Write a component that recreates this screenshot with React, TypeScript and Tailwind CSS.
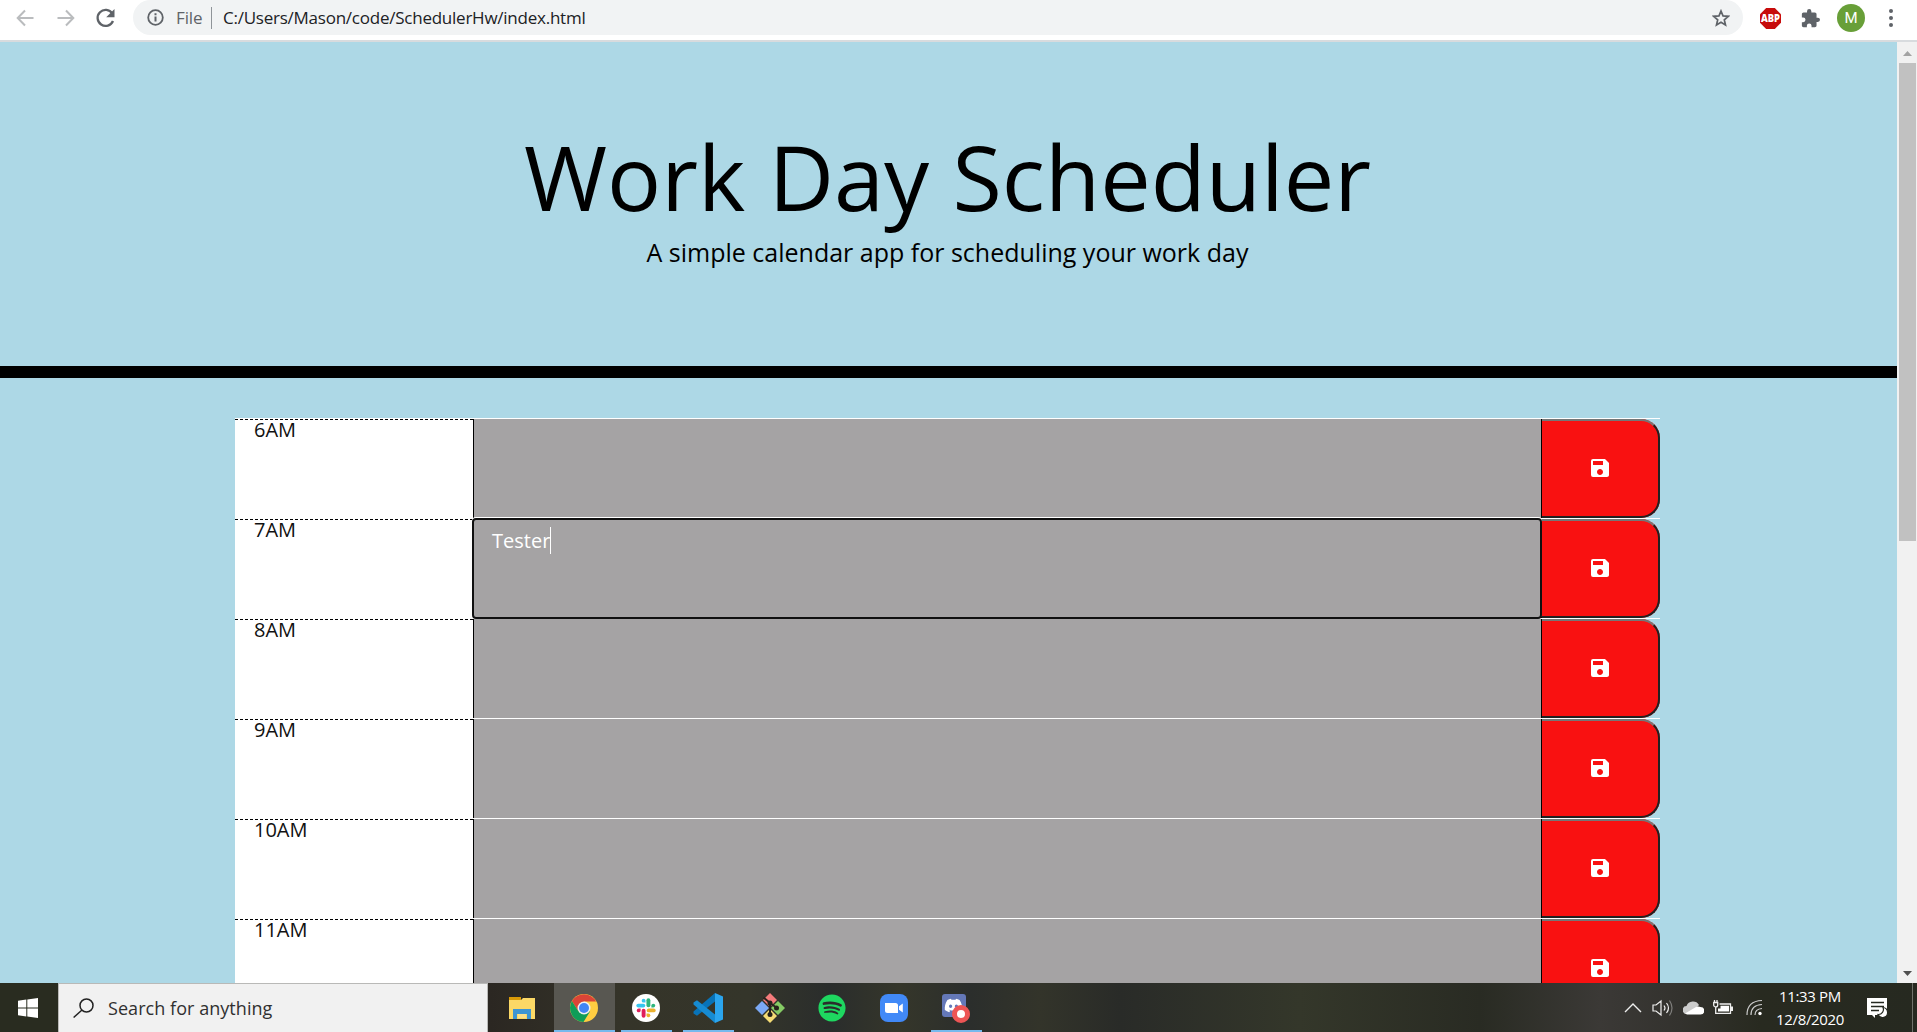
import React from "react";
import { MdSave } from "react-icons/md";
import { FaSpotify, FaDiscord } from "react-icons/fa";

const hours = ["6AM", "7AM", "8AM", "9AM", "10AM", "11AM"];

function BrowserBar() {
  return (
    <header className="flex h-[42px] shrink-0 items-start border-b-2 border-[#d8dbde] bg-white font-['Open_Sans',sans-serif] text-[#5f6368]">
      <div className="flex h-9 w-[133px] shrink-0 items-center">
        <svg className="ml-[16px] h-[18px] w-[18px]" viewBox="0 0 18 18" fill="none" stroke="#babcbe" strokeWidth="2">
          <path d="M17.5 9H2M9 1.5L1.7 9 9 16.5" />
        </svg>
        <svg className="ml-[23px] h-[18px] w-[18px]" viewBox="0 0 18 18" fill="none" stroke="#babcbe" strokeWidth="2">
          <path d="M.5 9H16M9 1.5L16.3 9 9 16.5" />
        </svg>
        <svg className="ml-[21px] h-[20px] w-[20px]" viewBox="0 0 20 20">
          <path d="M16.3 5.5A8 8 0 1 0 17 13" fill="none" stroke="#5f6368" strokeWidth="2.3" />
          <path d="M18.5 1v8.3h-8.3z" fill="#5f6368" />
        </svg>
      </div>
      <div className="flex h-[35px] w-[1610px] shrink-0 items-center rounded-[18px] bg-[#f1f3f4]">
        <svg className="ml-[14px] h-[17px] w-[17px]" viewBox="0 0 17 17">
          <circle cx="8.5" cy="8.5" r="7.3" fill="none" stroke="#5f6368" strokeWidth="1.8" />
          <path d="M8.5 7.4v5.2M8.5 4.2v2" stroke="#5f6368" strokeWidth="2" />
        </svg>
        <span className="ml-[12px] w-[26px] text-[17px] leading-[34px] tracking-[-0.1px]">File</span>
        <span className="ml-[9px] h-[22px] w-px bg-[#8f9499]" />
        <span className="ml-[11px] whitespace-nowrap text-[17px] leading-[34px] tracking-[-0.24px] text-[#202124]">
          C:/Users/Mason/code/SchedulerHw/index.html
        </span>
        <svg className="mr-[13px] ml-auto h-[18px] w-[18px]" viewBox="0 0 18 18" fill="none" stroke="#5f6368" strokeWidth="1.7">
          <path d="M9 2l2 4.9 5.3.4-4 3.5 1.2 5.2L9 13.2 4.500 16l1.200-5.200-4-3.500 5.300-.4z" />
        </svg>
      </div>
      <div className="flex h-9 flex-1 items-center">
        <svg className="ml-[17px] h-[21px] w-[21px]" viewBox="0 0 21 21">
          <path d="M6.200 0h8.600L21 6.200v8.600L14.800 21H6.200L0 14.800V6.200z" fill="#c70c0c" />
          <text x="10.500" y="14.200" textAnchor="middle" textLength="19" lengthAdjust="spacingAndGlyphs" fontFamily="Open Sans" fontSize="10.500" fontWeight="800" fill="#fff">ABP</text>
        </svg>
        <svg className="ml-[20px] h-[19px] w-[19px]" viewBox="1 1 22 22" fill="#5f6368">
          <path d="M20.500 11H19V7c0-1.100-.9-2-2-2h-4V3.500a2.500 2.500 0 0 0-5 0V5H4c-1.100 0-2 .9-2 2v3.800h1.500a2.700 2.700 0 0 1 0 5.400H2V20c0 1.100.9 2 2 2h3.800v-1.500a2.700 2.700 0 0 1 5.400 0V22H17c1.100 0 2-.9 2-2v-4h1.500a2.500 2.500 0 0 0 0-5z" />
        </svg>
        <div className="ml-[17px] flex h-[28px] w-[28px] items-center justify-center rounded-full bg-[#689f38] font-['Roboto',sans-serif] text-[15px] text-white">M</div>
        <div className="ml-[24px] flex flex-col gap-[3px]">
          <i className="h-[4px] w-[4px] rounded-full bg-[#5f6368]" />
          <i className="h-[4px] w-[4px] rounded-full bg-[#5f6368]" />
          <i className="h-[4px] w-[4px] rounded-full bg-[#5f6368]" />
        </div>
      </div>
    </header>
  );
}

function HourRow({ hour }: { hour: string }) {
  const focused = hour === "7AM";
  return (
    <div className="flex h-[100px] border-t border-white">
      <div className="w-[238px] shrink-0 border-t border-dashed border-black bg-white pl-[19px] text-[20px] leading-[20px] text-[#111]">
        {hour}
      </div>
      {focused ? (
        <div className="z-10 -mt-px -mr-px -ml-px flex h-[101px] w-[1070px] shrink-0 items-start rounded-[4px] border-2 border-[#101010] bg-[#a5a3a4] pt-[7px] pl-[18px] text-[20px] leading-[27px] text-white shadow-[0_-1px_0_0_#fff]">
          Tester
          <span className="h-[27px] w-px bg-white" />
        </div>
      ) : (
        <div className="h-[99px] w-[1068px] shrink-0 border-l border-black bg-[#a5a3a4]" />
      )}
      <div className="h-[99px] w-[119px] shrink-0 rounded-r-[19px] border-l border-black bg-[#f91111]">
        <div className="flex h-full w-full items-center justify-center rounded-r-[19px] border-t-2 border-r-2 border-b-2 border-t-[#767676] border-r-[#212121] border-b-[#212121] pb-[1px]">
          <MdSave className="h-[24px] w-[24px] text-white" />
        </div>
      </div>
    </div>
  );
}

function Page() {
  return (
    <main className="h-[941px] w-[1897px] shrink-0 overflow-hidden bg-[#add8e6] font-['Open_Sans',sans-serif] text-black">
      <div className="flex h-[336px] flex-col items-center border-b-[12px] border-black pt-[80px] pr-[2px]">
        <h1 className="text-[90px] leading-[108px] font-normal">Work Day Scheduler</h1>
        <p className="mt-[3px] text-[25px] leading-[38px]">A simple calendar app for scheduling your work day</p>
      </div>
      <div className="mt-[40px] ml-[235px] w-[1425px]">
        {hours.map((h) => (
          <HourRow key={h} hour={h} />
        ))}
      </div>
    </main>
  );
}

function Scrollbar() {
  return (
    <div className="flex w-[20px] flex-col items-center bg-[#f1f1f1]">
      <svg className="h-[21px] w-[20px] shrink-0" viewBox="0 0 20 21"><path d="M6 14l4.500-5 4.500 5z" fill="#a3a3a3" /></svg>
      <div className="h-[478px] w-[17px] bg-[#c1c1c1]" />
      <svg className="mt-auto h-[21px] w-[20px] shrink-0" viewBox="0 0 20 21"><path d="M6 9l4.500 5L15 9z" fill="#505050" /></svg>
    </div>
  );
}

function Explorer() {
  return (
    <svg className="h-[24px] w-[28px]" viewBox="0 0 28 24">
      <path d="M1 1h12v5H1z" fill="#d99a08" />
      <path d="M1 4h12l2-2h12v21H1z" fill="#fbd866" />
      <path d="M5 13h18v10h-4v-5h-10v5H5z" fill="#3d95d3" />
      <path d="M10 18h8v4h-8z" fill="#fbe08a" />
    </svg>
  );
}

function Chrome() {
  return (
    <svg className="h-[28px] w-[28px]" viewBox="0 0 28 28">
      <circle cx="14" cy="14" r="14" fill="#ffcd41" />
      <path d="M1.900 7A14 14 0 0 1 26.100 7.500H14L8.400 17.300z" fill="#db4437" />
      <path d="M1.900 7A14 14 0 0 0 13.500 28L20 17.500 8.400 17.300z" fill="#0f9d58" />
      <circle cx="14" cy="14" r="6.500" fill="#f1f1f1" />
      <circle cx="14" cy="14" r="5" fill="#4285f4" />
    </svg>
  );
}

function Slack() {
  return (
    <svg className="h-[28px] w-[28px]" viewBox="0 0 28 28">
      <circle cx="14" cy="14" r="14" fill="#fff" />
      <g fill="none" strokeWidth="3.900" strokeLinecap="round">
        <path d="M6.300 11.600h5" stroke="#36c5f0" />
        <path d="M16.400 6.300v5" stroke="#2eb67d" />
        <path d="M16.700 16.400h5" stroke="#ecb22e" />
        <path d="M11.600 16.700v5" stroke="#e01e5a" />
      </g>
      <path d="M13.500 8.600h-1.900a1.900 1.900 0 1 1 1.900-1.900z" fill="#36c5f0" />
      <path d="M19.400 13.500v-1.900a1.900 1.900 0 1 1 1.900 1.900z" fill="#2eb67d" />
      <path d="M14.500 19.400h1.900a1.900 1.900 0 1 1-1.900 1.900z" fill="#ecb22e" />
      <path d="M8.600 14.500v1.900a1.900 1.900 0 1 1-1.900-1.900z" fill="#e01e5a" />
    </svg>
  );
}

function Code() {
  return (
    <svg className="h-[30px] w-[30px]" viewBox="0 0 30 30">
      <path d="M22 0l8 3.500v23L22 30z" fill="#2ba5ee" />
      <path d="M22 0v8.500L4 22.700.5 20.500v-2z" fill="#0873b8" />
      <path d="M22 30v-8.500L4 7.300.5 9.500v2z" fill="#168bd2" />
    </svg>
  );
}

function Git() {
  return (
    <svg className="h-[30px] w-[30px]" viewBox="0 0 30 30">
      <path d="M15 0l7 7-7 7-7-7z" fill="#f47b7b" />
      <path d="M7 8l7 7-7 7-7-7z" fill="#7ba9f5" />
      <path d="M23 8l7 7-7 7-7-7z" fill="#85cb65" />
      <path d="M15 16l7 7-7 7-7-7z" fill="#f5dc75" />
      <path d="M8.500 4.500L15 10v12M15 10l7 5" fill="none" stroke="#26221c" strokeWidth="2" />
      <g fill="#26221c"><circle cx="15" cy="10" r="2.500" /><circle cx="15" cy="21.500" r="2.500" /><circle cx="21.500" cy="15" r="2.500" /></g>
    </svg>
  );
}

function Zoom() {
  return (
    <svg className="h-[28px] w-[28px]" viewBox="0 0 28 28">
      <rect width="28" height="28" rx="8" fill="#4189f7" />
      <path d="M5 9h10.500a2.500 2.500 0 0 1 2.500 2.500V19H7.500A2.500 2.500 0 0 1 5 16.500zM19 12.300L22.800 9.500v9L19 15.800z" fill="#fff" />
    </svg>
  );
}

function Discord() {
  return (
    <div className="relative h-[28px] w-[28px]">
      <div className="flex h-[23px] w-[24px] items-center justify-center rounded-[3px] bg-[#6478b8]">
        <FaDiscord className="h-[19px] w-[19px] text-white" />
      </div>
      <div className="absolute top-[11px] left-[10px] h-[18px] w-[18px] rounded-full border-[5px] border-[#ed5555] bg-white" />
    </div>
  );
}

function Task({ width, active, open, children }: { width: string; active?: boolean; open?: boolean; children: React.ReactNode }) {
  return (
    <div className={`flex h-[49px] shrink-0 flex-col items-center ${width} ${active ? "bg-[#585751]" : ""}`}>
      <div className="flex h-[47px] items-center pt-[2px] pr-[2px]">{children}</div>
      {open && <div className={`h-[2px] bg-[#76b9ed] ${active ? "w-full" : "w-[51px]"}`} />}
    </div>
  );
}

function Tray() {
  return (
    <div className="ml-auto flex h-[49px] items-center text-[#eee]">
      <svg className="h-[18px] w-[18px]" viewBox="0 0 18 18" fill="none" stroke="currentColor" strokeWidth="1.400"><path d="M1 13l8-8 8 8" /></svg>
      <svg className="ml-[10px] h-[20px] w-[22px]" viewBox="0 0 22 20" fill="none" stroke="currentColor" strokeWidth="1.200">
        <path d="M1 7v6h3l5 4V3L4 7zM12 7.500q2 2.500 0 5M14.500 5q4 5 0 10" /><path d="M17.500 2.500q5 7.500 0 15" opacity=".4" />
      </svg>
      <svg className="ml-[9px] h-[14px] w-[21px]" viewBox="0 0 21 14">
        <path d="M4 13a4 4 0 0 1-.5-8A7 7 0 0 1 16 4l-8 9z" fill="#ccc" />
        <path d="M2 12.500L13 6a5 5 0 0 1 4.500 0 3.700 3.700 0 0 1 0 7.500H4z" fill="#fff" />
      </svg>
      <svg className="ml-[9px] h-[15px] w-[21px]" viewBox="0 0 21 15" fill="none" stroke="currentColor" strokeWidth="1.300">
        <path d="M.7 2.500h4v2.500a2 2 0 0 1-4 0zM2.700 7v6.300h14.800V4H6.500M1.500 0v2.500M4 0v2.500" /><path d="M7.500 5.800H16v5.700H5V8.500h2.500z" fill="#fff" stroke="none" /><path d="M19 6.500v4.500" strokeWidth="2" />
      </svg>
      <svg className="ml-[12px] h-[17px] w-[17px]" viewBox="0 0 17 17" fill="none" stroke="#ccc" strokeWidth="1.200">
        <path d="M1 16Q1 2 16 1.500M5 16Q5 6 16 5.500M9 16Q9 10 16 9.500" /><circle cx="14" cy="14.500" r="1.700" fill="#fff" stroke="none" />
      </svg>
      <div className="ml-[12px] flex w-[70px] flex-col items-center pt-[1px] font-['Open_Sans',sans-serif] text-[15px] leading-[23px] tracking-[-0.35px] whitespace-nowrap text-white">
        <span>11:33 PM</span>
        <span>12/8/2020</span>
      </div>
      <svg className="ml-[22px] h-[21px] w-[21px]" viewBox="0 0 21 21">
        <path d="M0 1h20v17H8v3l-3-3H0z" fill="#fff" />
        <path d="M4 5.500h13M4 9.500h13M4 13.500h8" stroke="#252820" strokeWidth="1.300" />
        <path d="M16 10.500a5 5 0 0 1-5 7 5 5 0 1 0 5-7z" fill="#fff" stroke="#252820" strokeWidth="1.200" />
      </svg>
      <div className="ml-[24px] h-[49px] w-px bg-[#70726b]" />
      <div className="w-[4px]" />
    </div>
  );
}

function Taskbar() {
  return (
    <footer className="flex h-[49px] shrink-0 bg-[linear-gradient(90deg,#292c20_0px,#292c20_58px,#2b2722_490px,#353429_620px,#34352a_750px,#2a2d2c_830px,#35362a_900px,#2b2e2c_970px,#33342a_1040px,#292b28_1120px,#34372a_1300px,#292b23_1480px,#3b3936_1600px,#33322e_1680px,#282a20_1760px,#262920_1917px)]">
      <div className="flex w-[58px] items-center pl-[18px]">
        <svg className="h-[20px] w-[20px]" viewBox="0 0 20 20" fill="#fff"><path d="M0 2.800L8.300 1.600v7.900H0zM9.300 1.400L20 0v9.500H9.300zM0 10.500h8.300v7.900L0 17.200zM9.300 10.500H20V20L9.300 18.600z" /></svg>
      </div>
      <div className="flex w-[430px] items-center border border-b-0 border-[#b9b9b7] bg-[#f1f1f1] font-['Open_Sans',sans-serif]">
        <svg className="ml-[14px] h-[20px] w-[21px]" viewBox="0 0 21 20" fill="none" stroke="#222" strokeWidth="1.500"><circle cx="13.500" cy="7.500" r="6.500" /><path d="M9 12L.6 19.500" /></svg>
        <span className="ml-[14px] text-[18px] leading-[24px] tracking-[0.05px] text-[#303030]">Search for anything</span>
      </div>
      <div className="flex">
        <div className="w-[3px]" />
        <Task width="w-[63px]"><Explorer /></Task>
        <Task width="w-[61px]" active open><Chrome /></Task>
        <Task width="w-[63px]" open><Slack /></Task>
        <Task width="w-[61px]" open><Code /></Task>
        <Task width="w-[63px]"><Git /></Task>
        <Task width="w-[61px]"><FaSpotify className="h-[28px] w-[28px] text-[#1ed760]" /></Task>
        <Task width="w-[63px]"><Zoom /></Task>
        <Task width="w-[61px]" open><Discord /></Task>
      </div>
      <Tray />
    </footer>
  );
}

export default function App() {
  return (
    <div className="flex h-[1032px] w-[1917px] flex-col overflow-hidden">
      <BrowserBar />
      <div className="flex h-[941px] shrink-0">
        <Page />
        <Scrollbar />
      </div>
      <Taskbar />
    </div>
  );
}
